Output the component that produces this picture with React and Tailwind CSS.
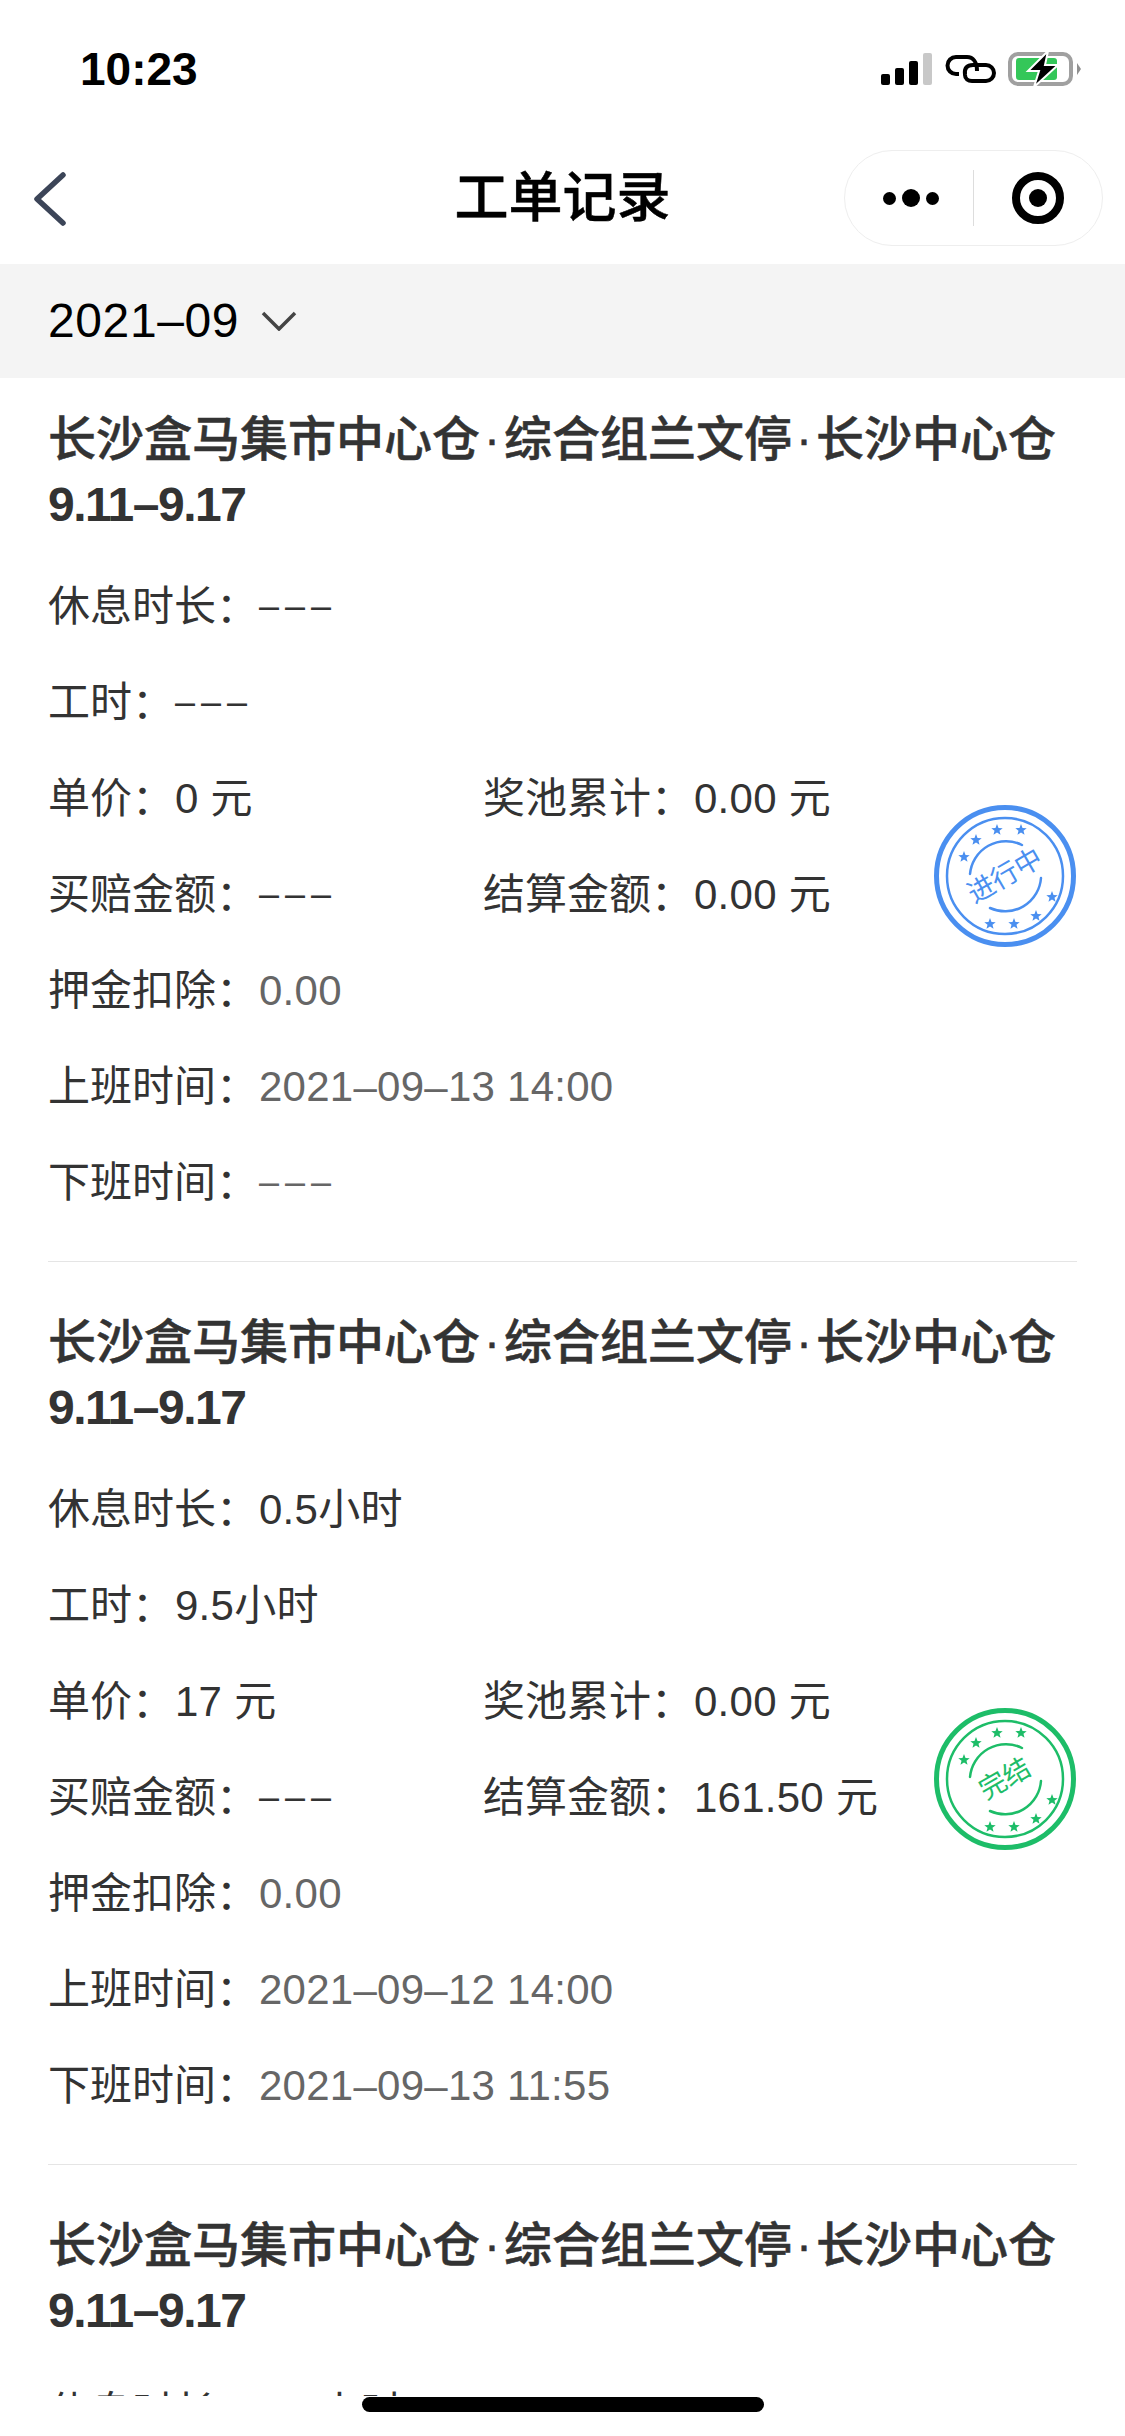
const fontStack = { fontFamily: '"Liberation Sans", "Noto Sans CJK SC", sans-serif' }
const colon = '\uFF1A'

const records = [
  {
    rest: '–––', hours: '–––', price: '0 元', pool: '0.00 元', fine: '–––', settle: '0.00 元',
    deposit: '0.00', start: '2021–09–13 14:00', end: '–––', status: 'doing',
  },
  {
    rest: '0.5小时', hours: '9.5小时', price: '17 元', pool: '0.00 元', fine: '–––', settle: '161.50 元',
    deposit: '0.00', start: '2021–09–12 14:00', end: '2021–09–13 11:55', status: 'done',
  },
  {
    rest: '0.5小时', hours: '9.5小时', price: '17 元', pool: '0.00 元', fine: '–––', settle: '0.00 元',
    deposit: '0.00', start: '2021–09–11 14:00', end: '2021–09–12 11:55',
  },
]

function Star({ x, y, color }) {
  // five point star, coordinates are the stamp's own
  const pts = []
  for (let i = 0; i < 10; i++) {
    const r = i % 2 === 0 ? 6 : 2.6
    const a = (Math.PI / 5) * i - Math.PI / 2
    pts.push(`${x + r * Math.cos(a)},${y + r * Math.sin(a)}`)
  }
  return <polygon points={pts.join(' ')} fill={color} />
}

function Stamp({ type }) {
  const color = type === 'doing' ? '#4a8ff0' : '#1dbd68'
  const stars = [[-8, -46], [16, -46], [-29, -36], [-41, -19], [47, 21], [31, 40], [9, 48], [-15, 48]]
  return (
    <svg width="144" height="144" viewBox="-72 -72 144 144" className="absolute right-0 top-[246px]">
      <circle r="68.5" fill="none" stroke={color} strokeWidth="5" />
      <circle r="58" fill="none" stroke={color} strokeWidth="2.5" />
      <path d="M -35 -2 A 36 36 0 0 1 17 -31" fill="none" stroke={color} strokeWidth="2.5" strokeLinecap="round" />
      <path d="M 36 2 A 36 36 0 0 1 -15 32" fill="none" stroke={color} strokeWidth="2.5" strokeLinecap="round" />
      {stars.map(([x, y], i) => <Star key={i} x={x} y={y} color={color} />)}
      <text
        x="0"
        y="9"
        textAnchor="middle"
        fontSize="27"
        fill={color}
        transform="rotate(-30)"
        style={{ fontFamily: '"Noto Sans CJK SC", sans-serif' }}
      >
        {type === 'doing' ? '进行中' : '完结'}
      </text>
    </svg>
  )
}

function Row({ label, value, gray }) {
  const isEmpty = value === '–––'
  return (
    <div className="h-[96px] flex items-center text-[42px] text-[#333] whitespace-nowrap">
      <span>{label}</span>
      <span className="font-['Noto_Sans_CJK_TC'] [font-feature-settings:'halt'] w-[43px]">{colon}</span>
      <span className={(gray ? 'text-[#666] ' : '') + (isEmpty ? 'text-[36px] tracking-[6px]' : 'tracking-[0.25px]')}>{value}</span>
    </div>
  )
}

function Record({ item, first, last }) {
  return (
    <div className={first ? 'px-[48px] pt-[29px]' : 'px-[48px] pt-[48px]'}>
      <h2 className="text-[48px] leading-[65px] font-medium text-[#333] whitespace-nowrap [-webkit-text-stroke:0.5px_#333]">
        <span className="block">
          长沙盒马集市中心仓<span className="mx-[4px]">·</span>综合组兰文停<span className="mx-[4px]">·</span>长沙中心仓
        </span>
        <span className="block font-bold tracking-[-1.5px] [-webkit-text-stroke:0]">9.11–9.17</span>
      </h2>
      <div className="relative mt-[21px] pb-[31px]">
        <Row label="休息时长" value={item.rest} />
        <Row label="工时" value={item.hours} />
        <div className="grid grid-cols-[435px_1fr]">
          <Row label="单价" value={item.price} />
          <Row label="奖池累计" value={item.pool} />
          <Row label="买赔金额" value={item.fine} />
          <Row label="结算金额" value={item.settle} />
        </div>
        <Row label="押金扣除" value={item.deposit} gray />
        <Row label="上班时间" value={item.start} gray />
        <Row label="下班时间" value={item.end} gray />
        {item.status && <Stamp type={item.status} />}
      </div>
      {!last && <div className="h-px bg-[#e5e5e5]" />}
    </div>
  )
}

function StatusBar() {
  return (
    <div className="h-[132px] pt-[6px] pl-[80px] pr-[43px] flex items-center justify-between">
      <span className="text-[46px] font-semibold text-black">10:23</span>
      <div className="flex items-center">
        <div className="flex items-end gap-[5px] h-[32px]">
          <div className="w-[9px] h-[11px] rounded-[2px] bg-black" />
          <div className="w-[9px] h-[17px] rounded-[2px] bg-black" />
          <div className="w-[9px] h-[24px] rounded-[2px] bg-black" />
          <div className="w-[9px] h-[32px] rounded-[2px] bg-[#c8c8c8]" />
        </div>
        <svg width="52" height="30" viewBox="0 0 52 30" fill="none" stroke="#000" strokeWidth="4" className="ml-[13px]">
          <path d="M32 17 C32 8 28 3 22 3 H11 A8.5 8.5 0 0 0 11 20 H14" />
          <path d="M20 21 C19 14 22 11 28 11 H41 A8 8 0 0 1 41 27 H27 C23 27 20 25 20 21" />
        </svg>
        <svg width="74" height="34" viewBox="0 0 74 34" className="ml-[11px] overflow-visible">
          <rect x="2" y="2" width="61" height="30" rx="8" fill="none" stroke="#a0a0a0" strokeWidth="4" />
          <rect x="8" y="6" width="41" height="22" rx="3" fill="#34c759" />
          <path d="M69 11 L73 17 L69 23 Z" fill="#909090" />
          <path d="M40 -1 L20 19 H31 L26 35 L50 13 H37 Z" fill="#000" stroke="#fff" strokeWidth="2" />
        </svg>
      </div>
    </div>
  )
}

function NavBar() {
  return (
    <div className="h-[132px] grid grid-cols-[1fr_auto_1fr] items-center">
      <div className="pl-[32px]">
        <svg width="36" height="56" viewBox="0 0 36 56" fill="none" stroke="#3c4558" strokeWidth="5.5" strokeLinecap="round" strokeLinejoin="round">
          <path d="M31 5 L5 29 L31 53" />
        </svg>
      </div>
      <h1 className="text-[54px] font-medium text-black leading-none [-webkit-text-stroke:0.5px_#000]">工单记录</h1>
      <div className="flex justify-end pr-[22px]">
        <div className="w-[259px] h-[96px] rounded-[48px] border border-[#eeeeee] flex items-center">
          <div className="w-[128px] flex items-center justify-center gap-[6px] pl-[4px]">
            <div className="w-[13px] h-[13px] rounded-full bg-black" />
            <div className="w-[18px] h-[18px] rounded-full bg-black" />
            <div className="w-[13px] h-[13px] rounded-full bg-black" />
          </div>
          <div className="w-px h-[56px] bg-[#dddddd]" />
          <div className="flex-1 flex items-center justify-center">
            <div className="w-[52px] h-[52px] rounded-full border-[8px] border-black flex items-center justify-center">
              <div className="w-[18px] h-[18px] rounded-full bg-black" />
            </div>
          </div>
        </div>
      </div>
    </div>
  )
}

export default function App() {
  return (
    <div className="relative w-[1125px] h-[2436px] bg-white overflow-hidden flex flex-col" style={fontStack}>
      <StatusBar />
      <NavBar />
      <div className="h-[114px] shrink-0 bg-[#f4f4f4] px-[48px] flex items-center">
        <span className="text-[48px] text-black tracking-[0.6px]">2021–09</span>
        <svg width="36" height="20" viewBox="0 0 36 20" fill="none" stroke="#444" strokeWidth="3.5" className="ml-[22px]">
          <path d="M2 2 L18 18 L34 2" />
        </svg>
      </div>
      <div className="flex-1 min-h-0 overflow-hidden">
        {records.map((item, i) => (
          <Record key={i} item={item} first={i === 0} last={i === records.length - 1} />
        ))}
      </div>
      <div className="h-[40px] shrink-0 bg-white" />
      <div className="absolute left-[362px] bottom-[24px] w-[402px] h-[15px] rounded-full bg-black" />
    </div>
  )
}
